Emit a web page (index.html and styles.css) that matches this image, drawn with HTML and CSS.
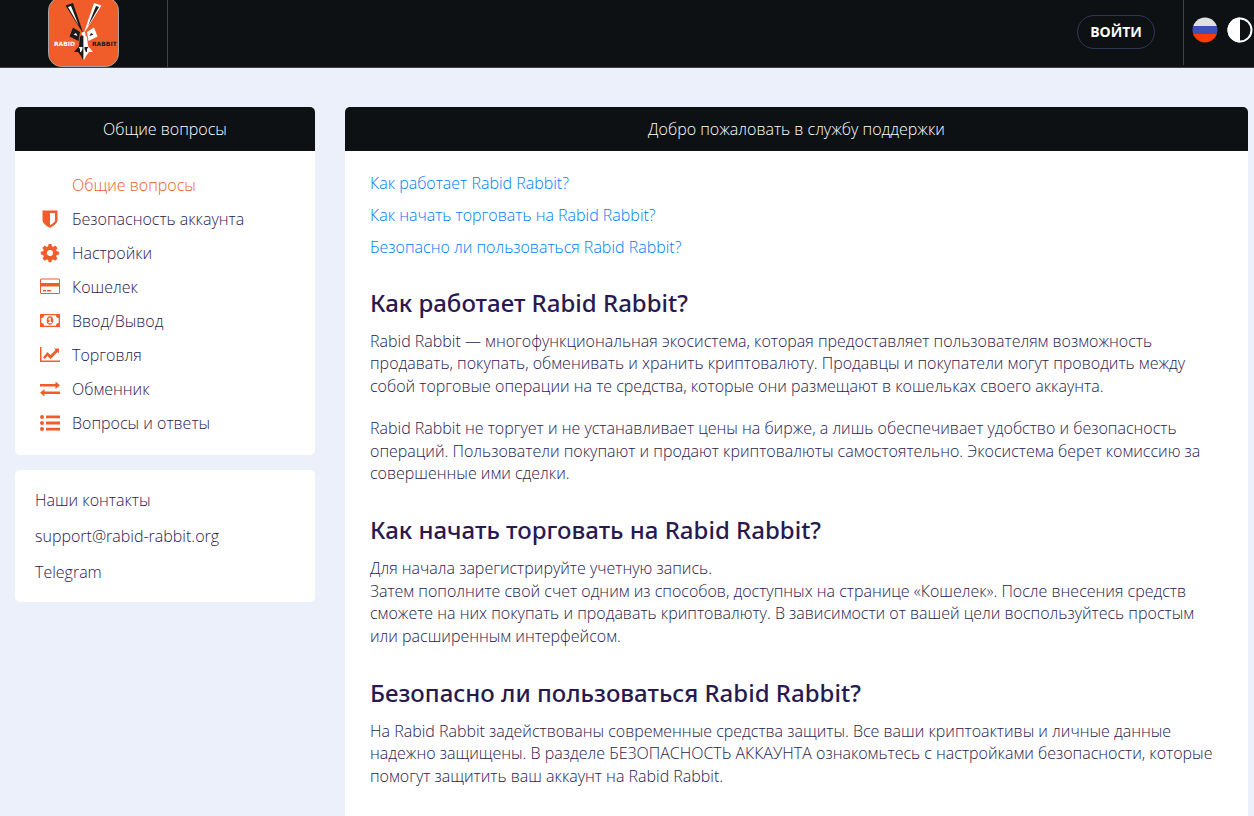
FILE: index.html
```html
<!DOCTYPE html>
<html lang="ru">
<head>
<meta charset="utf-8">
<meta name="viewport" content="width=device-width, initial-scale=1">
<title>Rabid Rabbit</title>
<link rel="stylesheet" href="styles.css">
</head>
<body>
<header class="topbar">
  <a class="brand" href="#" aria-label="Rabid Rabbit">
    <svg class="logo" viewBox="0 0 71 67" aria-hidden="true">
      <rect x=".5" y="-2.500" width="70" height="69" rx="13" fill="#f15d2a" stroke="#aaa39f"/>
      <path d="M17.500 5.500l7.500-2.500L35.500 34z" fill="#1b1a1c"/>
      <path d="M20 7l3-1 7.500 19z" fill="#fff"/>
      <path d="M53.500 5.500L46 3 35.500 34z" fill="#fff"/>
      <path d="M51 7l-3-1-8 20z" fill="#1b1a1c"/>
      <path d="M25 27.500l7 4.500-1.500 9-9-4.500z" fill="#1b1a1c"/>
      <path d="M46 27.500L39 32l1.500 9 9-4.500z" fill="#fff"/>
      <path d="M25.500 34.500l2.500-1.500 1.500 3z" fill="#fff"/>
      <path d="M45.500 34.500L43 33l-1.500 3z" fill="#1b1a1c"/>
      <path d="M35.500 33l-3.500 4-1 9-5 6h4l3 4 2.500 5z" fill="#1b1a1c"/>
      <path d="M35.500 33l3.500 4 1 9 5 6h-4l-3 4-2.500 5z" fill="#fff"/>
      <path d="M30.500 47h4v2l-1.500 3h-1v-3z" fill="#fff"/>
      <path d="M40.500 47h-4v2l1.500 3h1v-3z" fill="#1b1a1c"/>
      <circle cx="35.500" cy="34" r="2" fill="#fff"/>
      <text class="logo-text" x="6" y="46" fill="#fff">RABID</text>
      <text class="logo-text" x="44" y="46" fill="#1b1a1c">RABBIT</text>
    </svg>
  </a>
  <button class="login" type="button">ВОЙТИ</button>
  <div class="tools">
    <button class="tool" type="button" aria-label="Русский">
      <svg viewBox="0 0 26 26"><clipPath id="disc"><circle cx="13" cy="13" r="12.500"/></clipPath><g clip-path="url(#disc)"><path fill="#e0e0e0" d="M0 0h26v9H0z"/><path fill="#3f51b5" d="M0 9h26v8H0z"/><path fill="#ff3d00" d="M0 17h26v9H0z"/></g></svg>
    </button>
    <button class="tool" type="button" aria-label="Сменить тему">
      <svg viewBox="0 0 26 26"><circle cx="13" cy="13" r="11.500" fill="none" stroke="#fff" stroke-width="2"/><path fill="#fff" d="M13 .5a12.500 12.500 0 0 0 0 25z"/></svg>
    </button>
  </div>
</header>

<div class="page">
  <aside class="sidebar">
    <nav class="card">
      <h2 class="card-title">Общие вопросы</h2>
      <ul class="menu">
        <li><a class="menu-link active" href="#"><span class="icon"></span>Общие вопросы</a></li>
        <li><a class="menu-link" href="#"><svg class="icon" viewBox="0 0 20 20"><path fill-rule="evenodd" d="M2.500 1.500h15V11c0 3-3.500 5.800-7.500 7.800C6 16.800 2.500 14 2.500 11zM10 4v12.200c2.800-1.500 5-3.200 5-5.200V4z"/></svg>Безопасность аккаунта</a></li>
        <li><a class="menu-link" href="#"><svg class="icon" viewBox="0 0 20 20"><path fill-rule="evenodd" d="M8.600 1h2.800l.5 2.300 1.300.6 2-1.300 2.300 2.300-1.300 2 .5 1.300 2.300.5v2.900l-2.300.5-.5 1.300 1.300 2-2.300 2.300-2-1.300-1.300.6-.5 2.200H8.600l-.5-2.200-1.400-.6-2 1.300-2.300-2.300 1.300-2-.6-1.300-2.300-.5V8.700l2.300-.5.6-1.300-1.300-2 2.300-2.300 2 1.300 1.400-.6zM10 7a3 3 0 1 0 0 6 3 3 0 0 0 0-6z"/></svg>Настройки</a></li>
        <li><a class="menu-link" href="#"><svg class="icon" viewBox="0 0 20 20"><path fill-rule="evenodd" d="M1.500 1.500h17Q20 1.500 20 3v12.500q0 1.500-1.500 1.500h-17Q0 17 0 15.500V3q0-1.500 1.500-1.500zM1 3v3h18V3q0-.5-.5-.5h-17Q1 2.500 1 3zm0 6.500v6q0 .5.500.5h17q.5 0 .5-.5v-6z"/><path d="M3 13h3v1.500H3zM7 13h4v1.500H7z"/></svg>Кошелек</a></li>
        <li><a class="menu-link" href="#"><svg class="icon" viewBox="0 0 20 20"><path fill-rule="evenodd" d="M0 3h20v13H0zM4 4.200A2.700 2.700 0 0 1 1.300 7v5A2.700 2.700 0 0 1 4 14.800h12a2.700 2.700 0 0 1 2.700-2.800V7A2.700 2.700 0 0 1 16 4.200z"/><path fill-rule="evenodd" d="M10 5.200c4.400 0 4.400 8.600 0 8.600s-4.400-8.600 0-8.600zm-.5 1.500L8 8l.6.800.9-.5v2.700H8.300v1.200h3.600V11h-1.200V6.700z"/></svg>Ввод/Вывод</a></li>
        <li><a class="menu-link" href="#"><svg class="icon" viewBox="0 0 20 20"><path d="M0 2h1.500v13.500H20V17H0z"/><path d="M3 12.500L7.500 7l3 3L15.500 5 14 3.500h5v5L17.500 7l-7 7-3-3-3 3z"/></svg>Торговля</a></li>
        <li><a class="menu-link" href="#"><svg class="icon" viewBox="0 0 20 20"><path d="M0 5h15.500V2.500L20 6.200 15.500 10V7.400H0zM20 15H4.500v2.600L0 13.800 4.500 10v2.600H20z"/></svg>Обменник</a></li>
        <li><a class="menu-link" href="#"><svg class="icon" viewBox="0 0 20 20"><circle cx="2" cy="4" r="2"/><circle cx="2" cy="10" r="2"/><circle cx="2" cy="16" r="2"/><path d="M6 2.500h14v2.800H6zM6 8.600h14v2.800H6zM6 14.700h14v2.800H6z"/></svg>Вопросы и ответы</a></li>
      </ul>
    </nav>
    <address class="card contacts">
      <span>Наши контакты</span>
      <a href="mailto:support@rabid-rabbit.org">support@rabid-rabbit.org</a>
      <a href="#">Telegram</a>
    </address>
  </aside>

  <main class="card content">
    <h1 class="card-title">Добро пожаловать в службу поддержки</h1>
    <div class="article">
      <ul class="toc">
        <li><a href="#how">Как работает Rabid Rabbit?</a></li>
        <li><a href="#start">Как начать торговать на Rabid Rabbit?</a></li>
        <li><a href="#safe">Безопасно ли пользоваться Rabid Rabbit?</a></li>
      </ul>
      <section class="topic" id="how">
        <h2>Как работает Rabid Rabbit?</h2>
        <p>Rabid Rabbit — многофункциональная экосистема, которая предоставляет пользователям возможность продавать, покупать, обменивать и хранить криптовалюту. Продавцы и покупатели могут проводить между собой торговые операции на те средства, которые они размещают в кошельках своего аккаунта.</p>
        <p>Rabid Rabbit не торгует и не устанавливает цены на бирже, а лишь обеспечивает удобство и безопасность операций. Пользователи покупают и продают криптовалюты самостоятельно. Экосистема берет комиссию за совершенные ими сделки.</p>
      </section>
      <section class="topic" id="start">
        <h2>Как начать торговать на Rabid Rabbit?</h2>
        <p>Для начала зарегистрируйте учетную запись.<br>Затем пополните свой счет одним из способов, доступных на странице «Кошелек». После внесения средств сможете на них покупать и продавать криптовалюту. В зависимости от вашей цели воспользуйтесь простым или расширенным интерфейсом.</p>
      </section>
      <section class="topic" id="safe">
        <h2>Безопасно ли пользоваться Rabid Rabbit?</h2>
        <p>На Rabid Rabbit задействованы современные средства защиты. Все ваши криптоактивы и личные данные надежно защищены. В разделе БЕЗОПАСНОСТЬ АККАУНТА ознакомьтесь с настройками безопасности, которые помогут защитить ваш аккаунт на Rabid Rabbit.</p>
      </section>
    </div>
  </main>
</div>
</body>
</html>
```

FILE: styles.css
```css
* { box-sizing: border-box; }

body {
  margin: 0;
  min-height: 100vh;
  display: flex;
  flex-direction: column;
  background: #ecf0fa;
  color: #281a51;
  font: 300 16px/1.4 "Open Sans", sans-serif;
}

a { color: inherit; text-decoration: none; }
ul { list-style: none; margin: 0; padding: 0; }
h1, h2, p { margin: 0; }
button { font: inherit; color: inherit; cursor: pointer; }

.topbar {
  display: flex;
  height: 68px;
  background: #0d1114;
  border-bottom: 1px solid #3f4245;
}

.brand {
  width: 168px;
  padding-left: 48px;
  border-right: 1px solid #3f4245;
}
.logo { display: block; width: 71px; height: 67px; }
.logo-text { font: 700 6px "DejaVu Sans", sans-serif; }

.login {
  margin: 15px 28px 0 auto;
  width: 78px;
  height: 34px;
  padding: 0;
  border: 1px solid #30365a;
  border-radius: 17px;
  background: transparent;
  color: #fff;
  font-size: 14px;
  font-weight: 700;
}

.tools {
  display: flex;
  gap: 9px;
  height: 65px;
  padding: 17px 1px 0 8px;
  border-left: 1px solid #3f4245;
}
.tool {
  width: 26px;
  height: 26px;
  padding: 0;
  border: 0;
  background: none;
}
.tool svg { display: block; }

.page {
  flex: 1;
  display: grid;
  grid-template-columns: 300px 1fr;
  gap: 30px;
  padding: 39px 6px 0 15px;
}

.sidebar {
  display: flex;
  flex-direction: column;
  gap: 15px;
}

.card {
  background: #fff;
  border-radius: 5px;
}
.card-title {
  padding: 11px 16px;
  border-radius: 5px 5px 0 0;
  background: #0d1114;
  color: #fff;
  font-size: 16px;
  font-weight: 300;
  line-height: 22px;
  text-align: center;
}

.menu { padding: 17px 25px 15px; }
.menu-link {
  display: flex;
  align-items: center;
  gap: 12px;
  height: 34px;
}
.menu-link.active { color: #f15d2a; }
.icon {
  flex: none;
  width: 20px;
  height: 20px;
  fill: #f15d2a;
}

.contacts {
  display: flex;
  flex-direction: column;
  gap: 14px;
  padding: 19px 20px;
  font-style: normal;
  line-height: 22px;
}

.content { border-radius: 5px 5px 0 0; }
.article { padding: 16px 25px 24px; }
.toc {
  color: #007bff;
  line-height: 32px;
}

.topic { padding-top: 23px; }
.topic + .topic { padding-top: 29px; }
.topic h2 {
  margin-bottom: 10px;
  font-family: "Noto Sans", sans-serif;
  font-size: 24px;
  font-weight: 500;
  line-height: 34px;
}
.topic p + p { margin-top: 20px; }
```
